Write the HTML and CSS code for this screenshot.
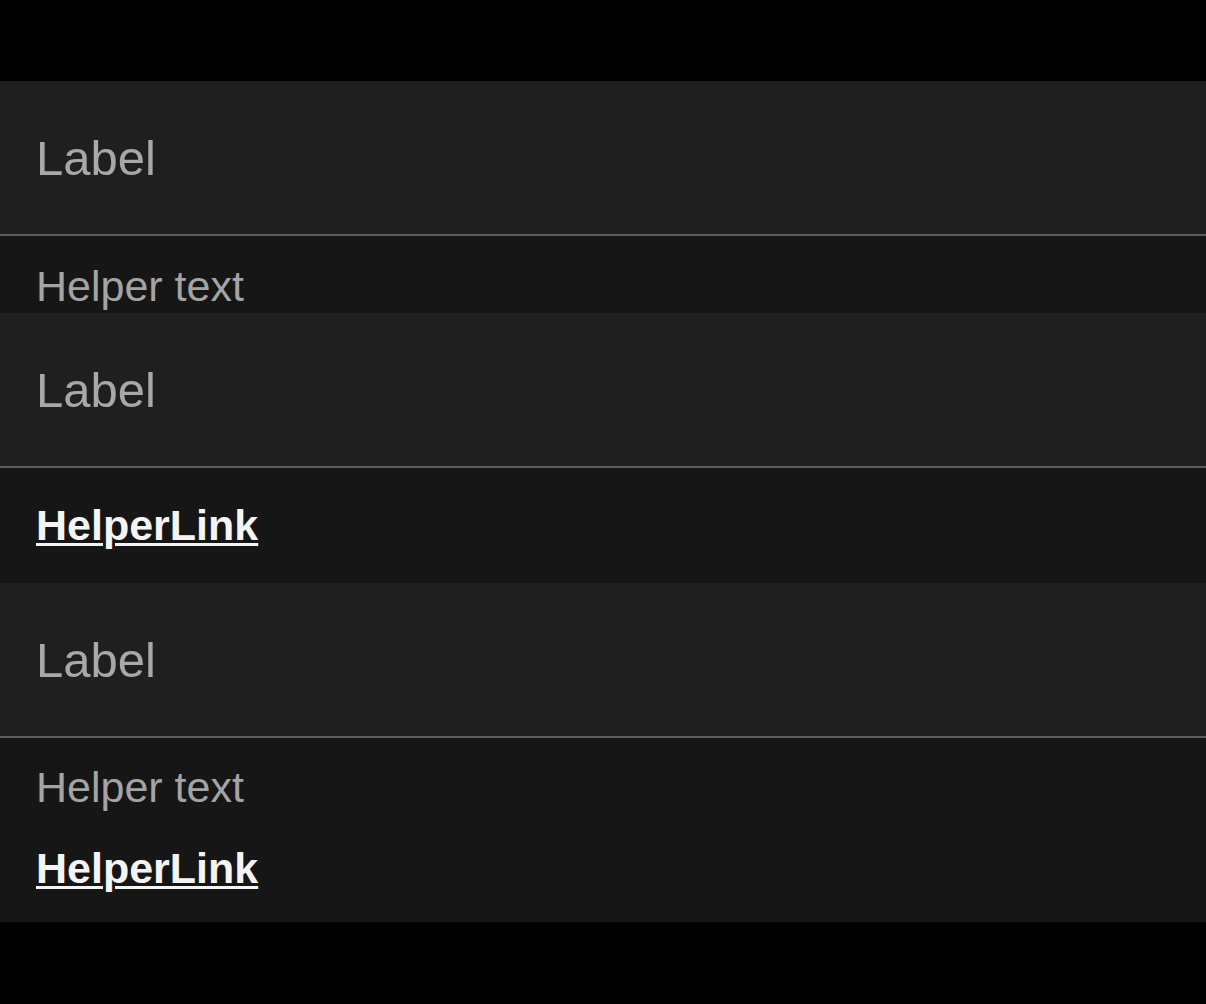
FILE: index.html
```html
<!DOCTYPE html>
<html lang="en">
<head>
<meta charset="utf-8">
<title>Fields</title>
<link rel="stylesheet" href="styles.css">
</head>
<body>
<main class="stack">
  <section class="field">
    <div class="field-input"><span class="field-label">Label</span></div>
    <div class="field-helper helper-text-only">
      <p class="helper-text">Helper text</p>
    </div>
  </section>
  <section class="field">
    <div class="field-input"><span class="field-label">Label</span></div>
    <div class="field-helper helper-link-only">
      <a class="helper-link" href="#">HelperLink</a>
    </div>
  </section>
  <section class="field">
    <div class="field-input"><span class="field-label">Label</span></div>
    <div class="field-helper helper-both">
      <p class="helper-text">Helper text</p>
      <a class="helper-link" href="#">HelperLink</a>
    </div>
  </section>
</main>
</body>
</html>
```
FILE: styles.css
```css
* { box-sizing: border-box; }
html, body {
  margin: 0;
  padding: 0;
  background: #000;
  font-family: "Liberation Sans", Arial, sans-serif;
}
.stack {
  display: flex;
  flex-direction: column;
  padding-top: 81px;
}
.field {
  display: flex;
  flex-direction: column;
}
.field-input {
  height: 155px;
  background: #1f1f1f;
  border-bottom: 2px solid #5e5e5e;
  padding: 48px 36px 0;
}
.field-label {
  display: block;
  font-size: 49px;
  line-height: 58px;
  color: #a8a8a8;
}
.field-helper {
  background: #161616;
  padding: 0 36px;
  display: flex;
  flex-direction: column;
  align-items: flex-start;
}
.helper-text {
  margin: 0;
  font-size: 43px;
  line-height: 50px;
  color: #a4a4a4;
}
.helper-link {
  font-size: 43px;
  line-height: 50px;
  font-weight: 700;
  color: #f4f4f4;
  text-decoration: underline;
  text-decoration-thickness: 3px;
  text-underline-offset: 3px;
}
.helper-text-only { height: 77px; padding-top: 25px; }
.helper-link-only { height: 115px; padding-top: 32px; }
.helper-both { height: 184px; padding-top: 24px; }
.helper-both .helper-link { margin-top: 31px; }
```
